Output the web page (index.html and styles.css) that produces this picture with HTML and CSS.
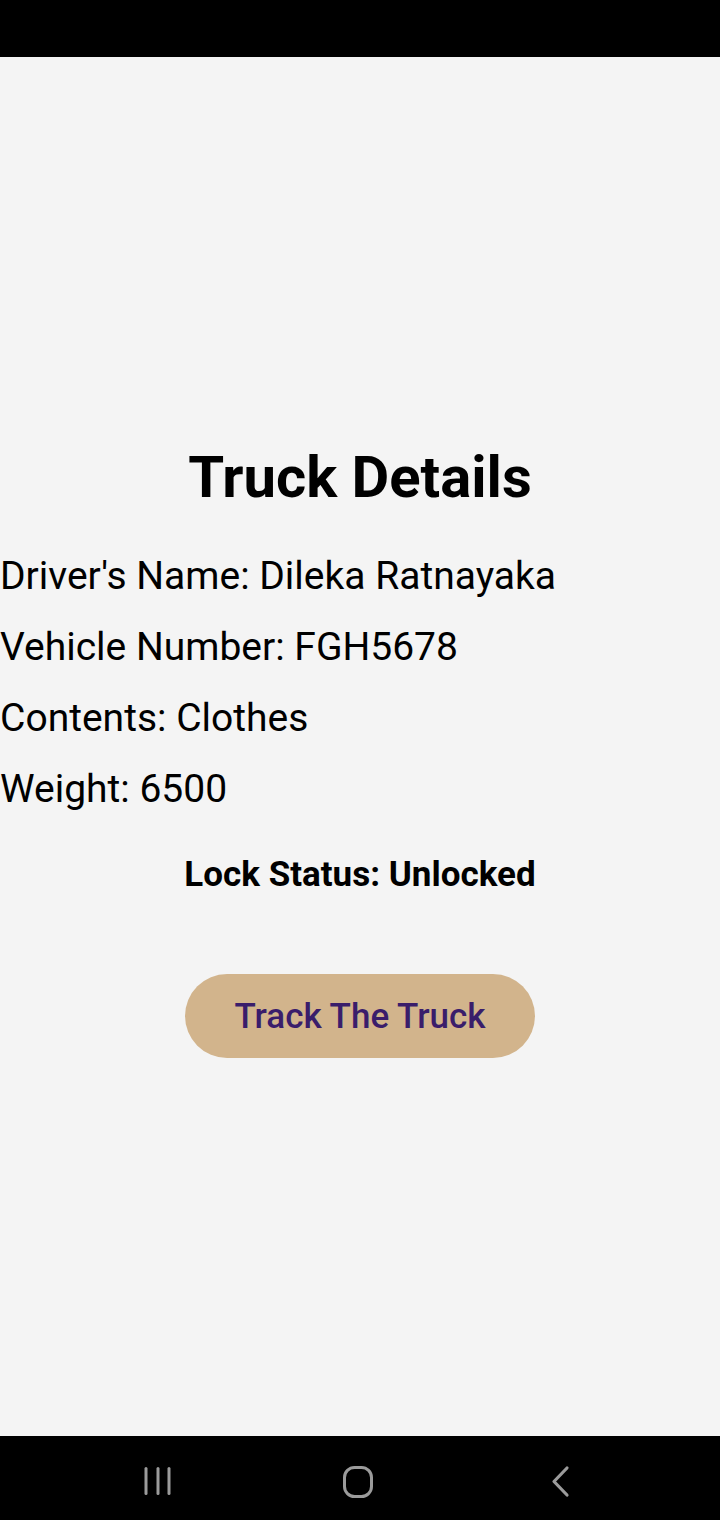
FILE: index.html
```html
<!DOCTYPE html>
<html>
<head>
<meta charset="utf-8">
<link rel="stylesheet" href="styles.css">
</head>
<body>
<div class="screen">
  <div class="status-bar"></div>
  <main class="content">
    <h1 class="title">Truck Details</h1>
    <div class="details">
      <p class="detail">Driver's Name: Dileka Ratnayaka</p>
      <p class="detail">Vehicle Number: FGH5678</p>
      <p class="detail">Contents: Clothes</p>
      <p class="detail">Weight: 6500</p>
    </div>
    <p class="lock">Lock Status: Unlocked</p>
    <button class="track-btn">Track The Truck</button>
  </main>
  <nav class="nav-bar">
    <svg class="nav-icon" width="40" height="40" viewBox="0 0 40 40">
      <rect x="6.5" y="6" width="3" height="28" rx="1.5" fill="#9b9b9b"/>
      <rect x="18.5" y="6" width="3" height="28" rx="1.5" fill="#9b9b9b"/>
      <rect x="29.5" y="6" width="3" height="28" rx="1.5" fill="#9b9b9b"/>
    </svg>
    <svg class="nav-icon" width="40" height="40" viewBox="0 0 40 40">
      <rect x="5.5" y="6.5" width="27" height="29" rx="10" fill="none" stroke="#9b9b9b" stroke-width="3"/>
    </svg>
    <svg class="nav-icon" width="40" height="40" viewBox="0 0 40 40">
      <polyline points="27,7 14,20.5 27,34" fill="none" stroke="#9b9b9b" stroke-width="3.2" stroke-linecap="round" stroke-linejoin="round"/>
    </svg>
  </nav>
</div>
</body>
</html>
```

FILE: styles.css
```css
* { box-sizing: border-box; }
html, body {
  margin: 0;
  padding: 0;
  background: #f4f4f4;
}
body {
  font-family: Roboto, "Liberation Sans", sans-serif;
  color: #000;
}
.screen {
  width: 720px;
  height: 1520px;
  display: flex;
  flex-direction: column;
}
.status-bar {
  height: 57px;
  background: #000;
  flex: none;
}
.content {
  flex: 1;
  display: flex;
  flex-direction: column;
  padding-top: 386px;
}
.title {
  margin: 0;
  font-size: 58px;
  line-height: 68px;
  font-weight: 700;
  text-align: center;
}
.details {
  margin-top: 30px;
}
.detail {
  margin: 0;
  font-size: 39px;
  line-height: 71px;
  font-weight: 400;
}
.lock {
  margin: 30px 0 0;
  font-size: 35px;
  line-height: 40px;
  font-weight: 700;
  text-align: center;
}
.track-btn {
  align-self: center;
  margin-top: 79px;
  width: 350px;
  height: 84px;
  border: none;
  border-radius: 42px;
  background: #d2b48c;
  color: #3a1d6b;
  font-family: Roboto, "Liberation Sans", sans-serif;
  font-size: 35px;
  font-weight: 500;
  padding: 0;
}
.nav-bar {
  height: 84px;
  flex: none;
  background: #000;
  display: flex;
  align-items: center;
  justify-content: space-between;
  padding: 6px 140px 0 138px;
}
.nav-icon {
  display: block;
}
```
